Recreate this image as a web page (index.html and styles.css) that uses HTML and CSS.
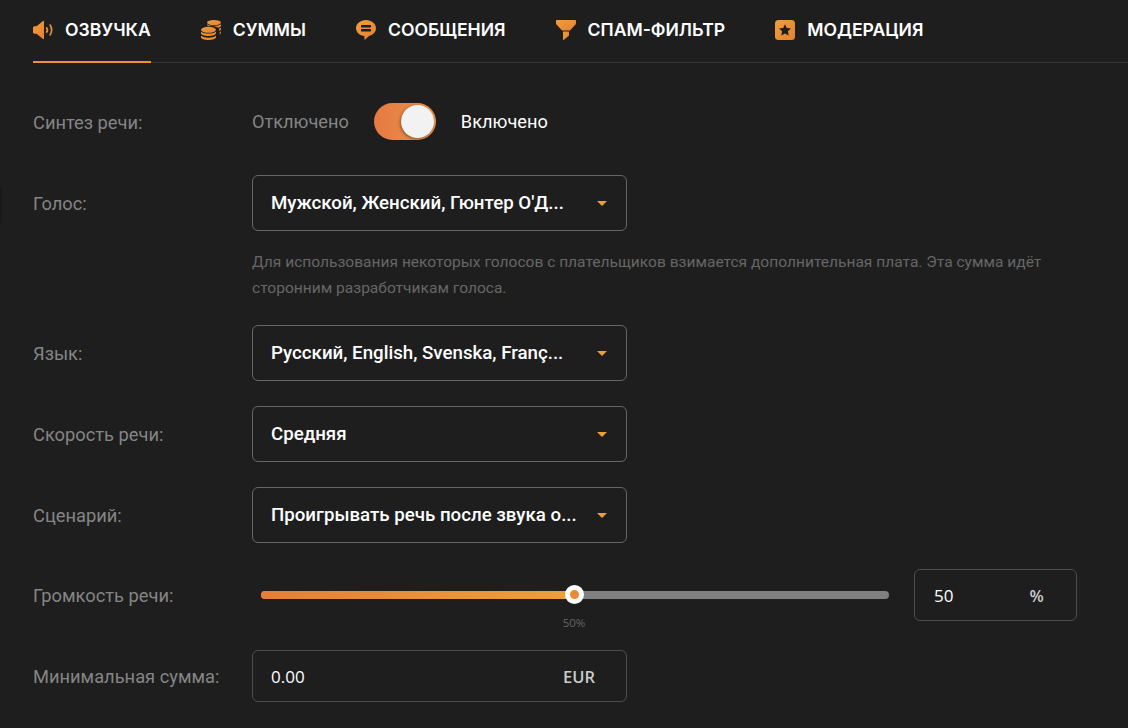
FILE: index.html
```html
<!DOCTYPE html>
<html lang="ru">
<head>
<meta charset="utf-8">
<title>Озвучка</title>
<link rel="stylesheet" href="styles.css">
</head>
<body>
<div class="edge"></div>
<svg class="defs" width="0" height="0" aria-hidden="true">
  <defs>
    <linearGradient id="og" x1="0" y1="0" x2="1" y2="1">
      <stop offset="0" stop-color="#eea038"/>
      <stop offset="1" stop-color="#e67f35"/>
    </linearGradient>
  </defs>
</svg>
<nav class="tabs">
  <a class="tab active">
    <svg class="ico" viewBox="0 0 20 20"><path fill="url(#og)" d="M0 8c0-1 .6-1.700 1.500-1.700h2L10 1c.4-.3 1-.1 1 .5v17c0 .6-.6.8-1 .5l-6.500-5.300h-2C.6 13.700 0 13 0 12z"/><path fill="none" stroke="#e98f37" stroke-width="1.700" d="M13.300 7.200c1.200 1.500 1.200 4.100 0 5.600M16.700 4.500c2.600 3 2.600 8 0 11"/></svg>
    <span>ОЗВУЧКА</span>
  </a>
  <a class="tab">
    <svg class="ico" viewBox="0 0 20 20"><g fill="url(#og)"><ellipse cx="13" cy="2.600" rx="7" ry="2.600"/><path d="M6 4.200c1.500 1 3.800 1.700 7 1.700s5.500-.7 7-1.700v1.300c0 .9-1 1.700-2.600 2.200-1.800-1-4.600-1.600-7.400-1.600-1.300 0-2.400-.1-3.400-.4C6.300 5.400 6 5 6 4.500z"/><path d="M17.900 8.800c1-.4 1.700-.9 2.100-1.400v1.500c0 .8-.5 1.500-1.500 2-.1-.7-.3-1.400-.6-2.100zM18.800 12.200c.5-.3.9-.6 1.200-1v1.400c0 .8-.5 1.400-1.200 1.800z"/><ellipse cx="7.500" cy="9.800" rx="7.500" ry="3"/><path d="M0 11.700c1.400 1.200 4.200 1.900 7.500 1.900s6.100-.7 7.500-1.900v1.500c0 1.500-3.400 2.700-7.500 2.700S0 14.700 0 13.200z"/><path d="M0 15.800c1.400 1.200 4.200 1.900 7.500 1.900s6.100-.7 7.500-1.900v1.400c0 1.600-3.400 2.800-7.500 2.800S0 18.800 0 17.200z"/></g></svg>
    <span>СУММЫ</span>
  </a>
  <a class="tab">
    <svg class="ico" viewBox="0 0 20 20"><path fill="url(#og)" d="M10 0c5.500 0 10 3.700 10 8.100 0 4.200-3.400 7.200-7 7.900l-3.800 3.500c-.4.300-.8.100-.8-.3V16C3.800 15.800 0 12.500 0 8.100 0 3.700 4.500 0 10 0z"/><rect x="5" y="5" width="10" height="2.400" rx=".6" fill="#1e1e1e"/><rect x="5" y="9" width="10" height="2.400" rx=".6" fill="#1e1e1e"/></svg>
    <span>СООБЩЕНИЯ</span>
  </a>
  <a class="tab">
    <svg class="ico" viewBox="0 0 20 20"><path fill="url(#og)" d="M.8 0h18.400c.5 0 .8.300.8.800V3c0 .5-.2 1-.5 1.400L14 10.500H6L.5 4.400C.2 4 0 3.500 0 3V.8C0 .3.300 0 .8 0z"/><path fill="url(#og)" d="M7 11.500h6v3.800c0 .3-.1.500-.4.700l-4.600 3.800c-.4.300-1 .1-1-.4z"/></svg>
    <span>СПАМ-ФИЛЬТР</span>
  </a>
  <a class="tab">
    <svg class="ico" viewBox="0 0 20 20"><rect width="20" height="20" rx="3.500" fill="url(#og)"/><path fill="#1e1e1e" d="M10 4.200l1.800 3.800 4.200.5-3.100 2.800.8 4.100-3.700-2-3.700 2 .8-4.100L4 8.500 8.200 8z"/></svg>
    <span>МОДЕРАЦИЯ</span>
  </a>
</nav>

<main class="form">
  <div class="row toggle-row">
    <div class="label">Синтез речи:</div>
    <div class="toggle-group">
      <span class="off">Отключено</span>
      <span class="switch"><span class="knob"></span></span>
      <span class="on">Включено</span>
    </div>
  </div>

  <div class="row voice-row">
    <div class="label">Голос:</div>
    <div class="select"><span class="value">Мужской, Женский, Гюнтер О'Д...</span><i class="caret"></i></div>
  </div>
  <p class="hint">Для использования некоторых голосов с плательщиков взимается дополнительная плата. Эта сумма идёт сторонним разработчикам голоса.</p>

  <div class="row gap-row">
    <div class="label">Язык:</div>
    <div class="select"><span class="value">Русский, English, Svenska, Franç...</span><i class="caret"></i></div>
  </div>
  <div class="row gap-row">
    <div class="label">Скорость речи:</div>
    <div class="select"><span class="value">Средняя</span><i class="caret"></i></div>
  </div>
  <div class="row gap-row">
    <div class="label">Сценарий:</div>
    <div class="select"><span class="value">Проигрывать речь после звука о...</span><i class="caret"></i></div>
  </div>

  <div class="row slider-row">
    <div class="label">Громкость речи:</div>
    <div class="slider">
      <div class="track">
        <div class="fill"></div>
        <div class="thumb"></div>
        <div class="mark">50%</div>
      </div>
    </div>
    <div class="field percent"><span class="num">50</span><span class="unit">%</span></div>
  </div>

  <div class="row amount-row">
    <div class="label">Минимальная сумма:</div>
    <div class="field amount"><span class="num">0.00</span><span class="unit cur">EUR</span></div>
  </div>
</main>
</body>
</html>
```
FILE: styles.css
```css
* { box-sizing: border-box; }
html, body { height: 100%; }
body {
  margin: 0;
  background: #1e1e1e;
  color: #fff;
  font-family: Roboto, "Liberation Sans", sans-serif;
  font-size: 16px;
  overflow: hidden;
}
.defs { position: absolute; }
.edge {
  position: absolute;
  left: -6px;
  top: 186px;
  width: 8px;
  height: 38px;
  border-radius: 4px;
  background: #191919;
}

.tabs {
  display: flex;
  gap: 50px;
  height: 63px;
  padding-left: 33px;
  position: relative;
}
.tabs::after {
  content: "";
  position: absolute;
  left: 151px;
  right: 0;
  top: 62px;
  height: 1px;
  background: #333;
}
.tab {
  display: flex;
  align-items: flex-start;
  gap: 12px;
  padding-top: 20px;
  height: 63px;
  font-family: Inter, Roboto, sans-serif;
  font-weight: 600;
  font-size: 17.600px;
  line-height: 20px;
  color: #fff;
  border-bottom: 2px solid transparent;
}
.tab.active { border-bottom-color: #ea9236; }
.ico { width: 20px; height: 20px; flex: none; }

.form { padding-left: 33px; }
.row { display: flex; align-items: center; }
.label {
  width: 219px;
  flex: none;
  color: #858585;
  font-size: 18.300px;
  line-height: 24px;
  padding-top: 2px;
}

.toggle-row { margin-top: 40px; height: 37px; }
.toggle-group { display: flex; align-items: center; }
.off { color: #858585; font-size: 18.200px; line-height: 24px; }
.on { color: #fff; font-size: 18.200px; line-height: 24px; }
.switch {
  width: 62px;
  height: 37px;
  margin: 0 25px;
  border-radius: 19px;
  background: linear-gradient(90deg, #e67a42, #e99348);
  position: relative;
}
.knob {
  position: absolute;
  right: 2px;
  top: 2px;
  width: 33px;
  height: 33px;
  border-radius: 50%;
  background: #f2f2f2;
  box-shadow: -1px 1px 3px rgba(40,20,0,.45);
}

.voice-row { margin-top: 35px; }
.select {
  width: 375px;
  height: 56px;
  border: 1px solid #666;
  border-radius: 6px;
  display: flex;
  align-items: center;
  justify-content: space-between;
  padding: 0 19px 0 18px;
}
.value { font-weight: 500; font-size: 18.700px; color: #fff; white-space: nowrap; }
.caret {
  width: 0;
  height: 0;
  border-left: 5px solid transparent;
  border-right: 5px solid transparent;
  border-top: 5px solid #ea9f38;
}

.hint {
  margin: 18px 0 0 219px;
  width: 810px;
  color: #666;
  font-size: 15.550px;
  line-height: 26px;
}
.gap-row { margin-top: 25px; }
.hint + .gap-row { margin-top: 24px; }

.slider-row { margin-top: 26px; height: 52px; }
.slider { width: 628px; margin: 0 25px 0 9px; flex: none; }
.track {
  height: 8px;
  border-radius: 4px;
  background: #808080;
  position: relative;
}
.fill {
  width: 50%;
  height: 100%;
  border-radius: 4px 0 0 4px;
  background: linear-gradient(90deg, #e67f35, #eea038);
}
.thumb {
  position: absolute;
  left: 303.500px;
  top: -6px;
  width: 19px;
  height: 19px;
  border-radius: 50%;
  background: #e98a35;
  border: 5.500px solid #fff;
}
.mark {
  position: absolute;
  left: 293px;
  width: 40px;
  top: 24px;
  text-align: center;
  font-family: "Open Sans", sans-serif;
  font-size: 11.500px;
  color: #666;
}

.field {
  height: 52px;
  border: 1px solid #4d4d4d;
  border-radius: 6px;
  display: flex;
  align-items: center;
  font-family: "Open Sans", sans-serif;
}
.percent { width: 163px; padding-left: 19px; }
.percent .unit { margin-left: 76px; }
.num { font-size: 17px; color: #fff; }
.unit { font-size: 16.500px; font-weight: 600; color: #ccc; }
.amount-row { margin-top: 29px; }
.amount { width: 375px; padding: 0 31px 0 18px; justify-content: space-between; }
```
